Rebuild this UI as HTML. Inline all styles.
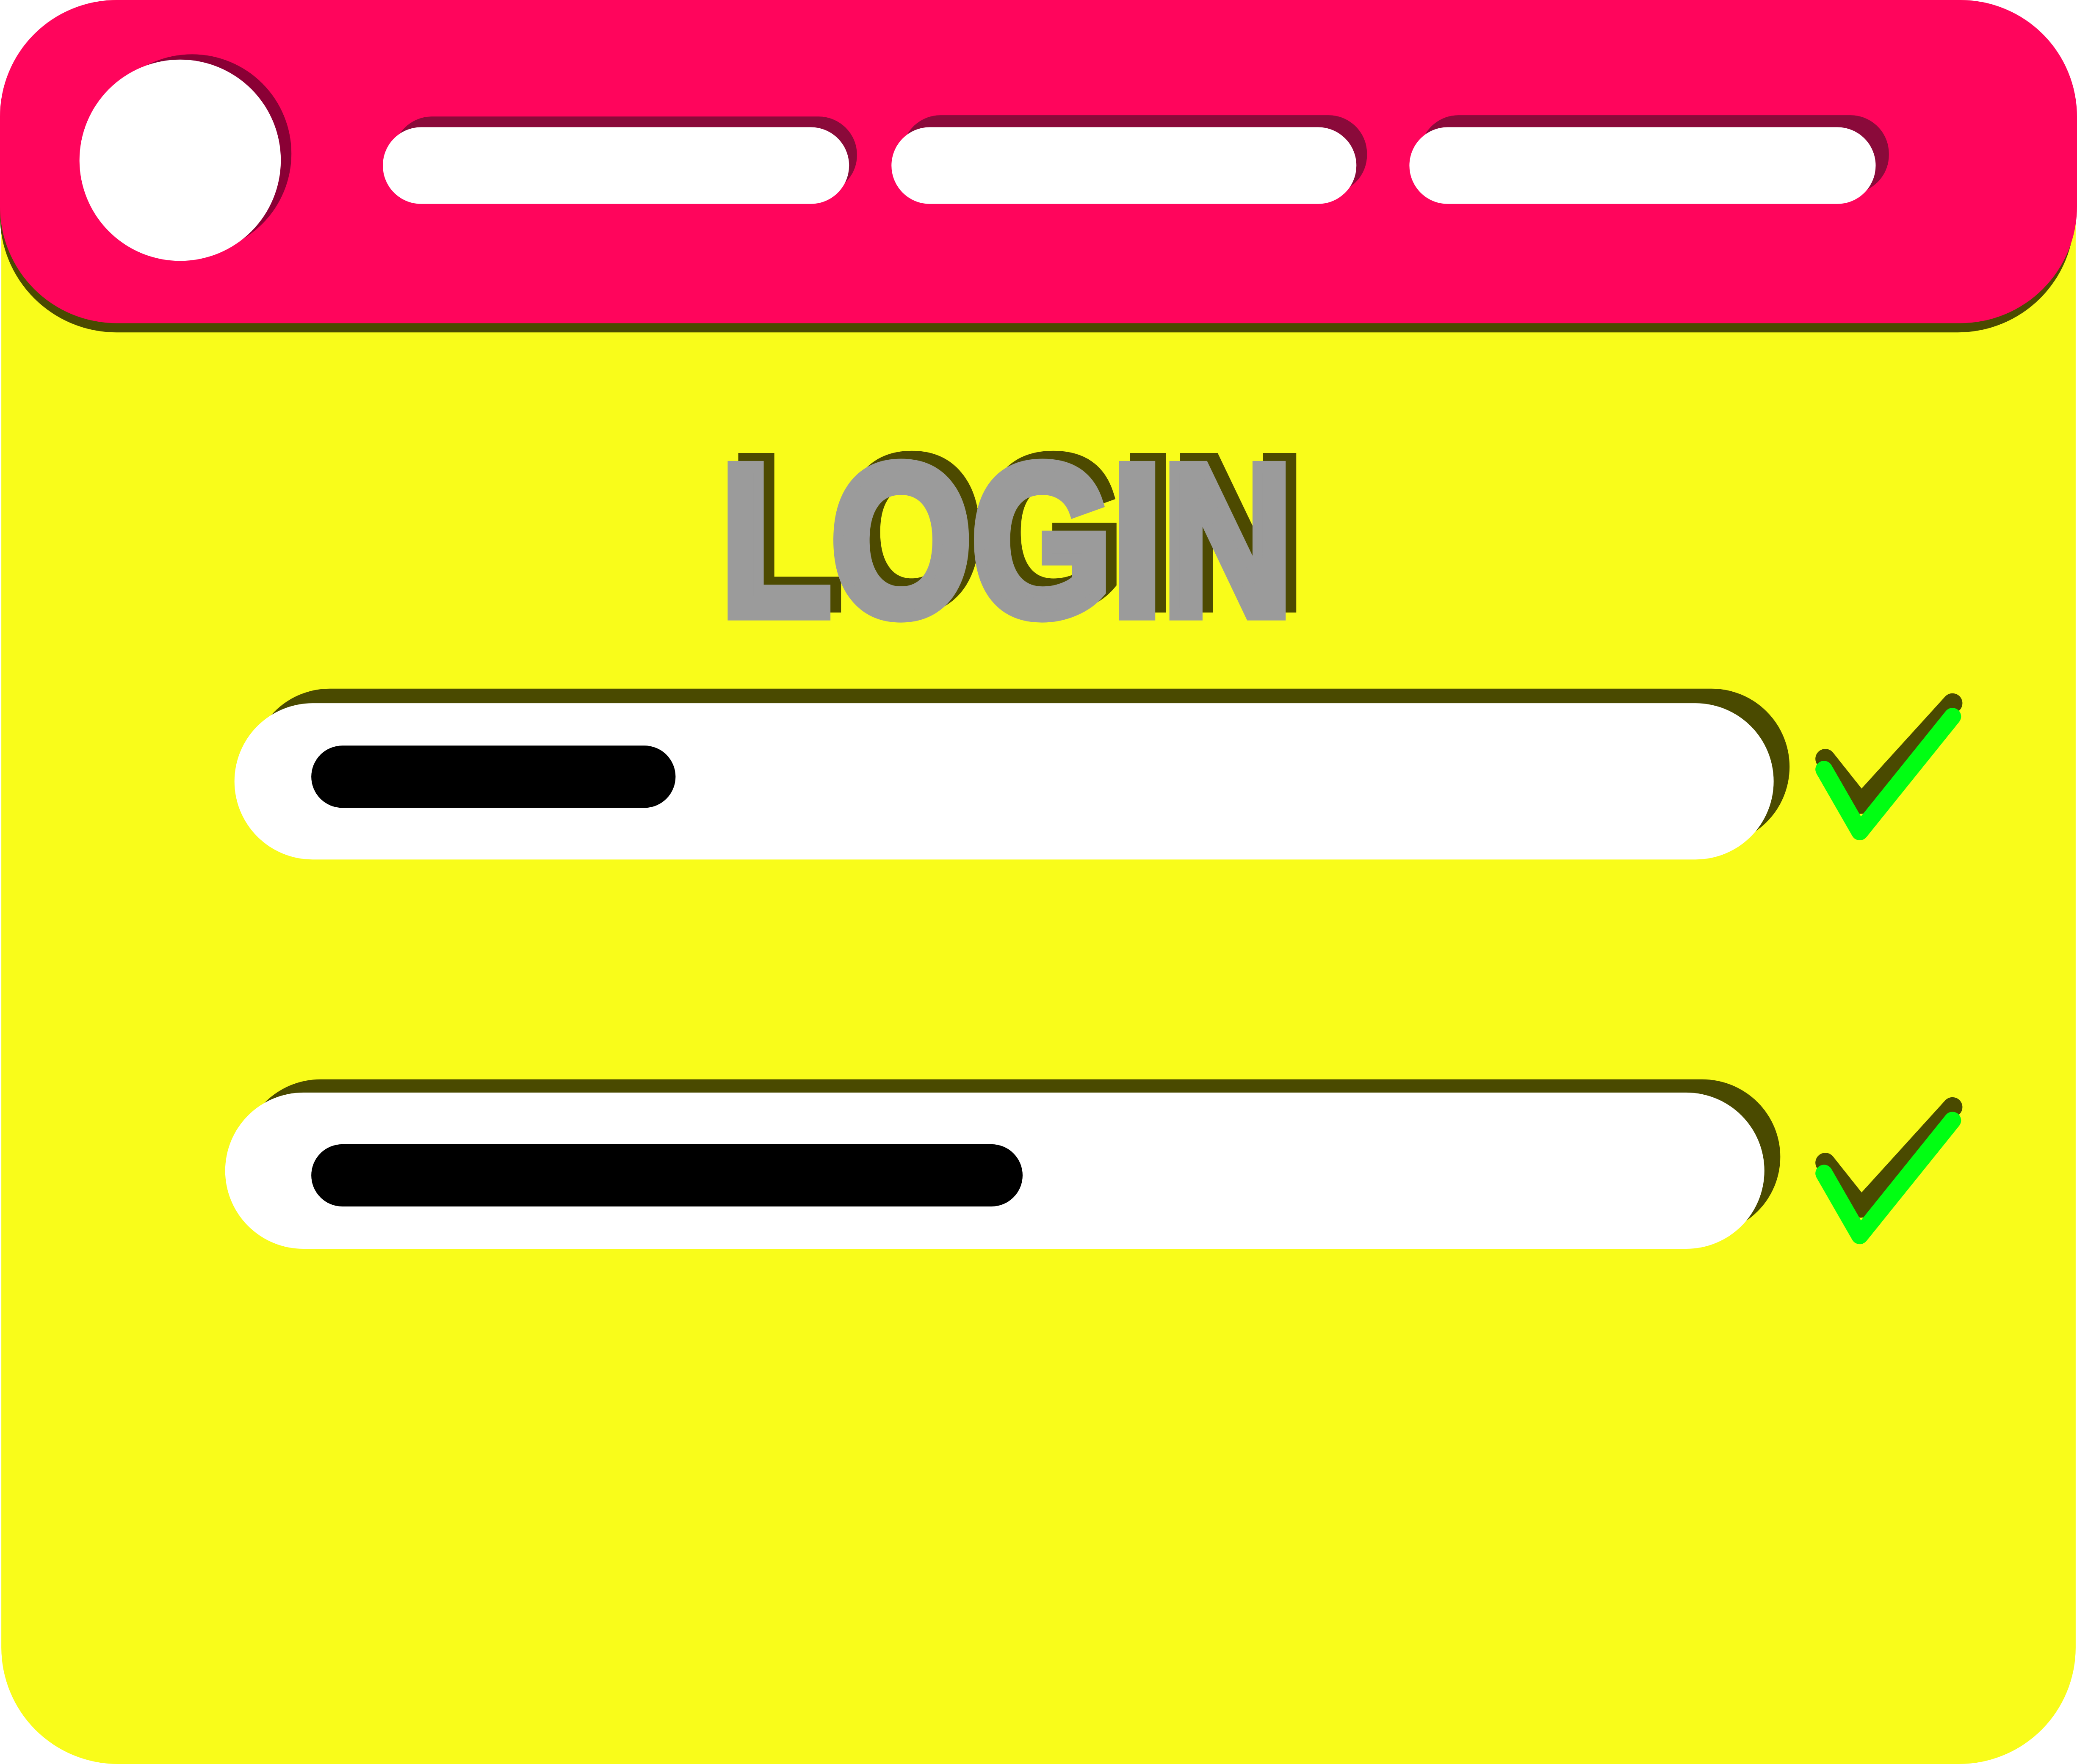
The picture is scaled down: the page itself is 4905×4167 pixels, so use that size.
<!DOCTYPE html>
<html><head><meta charset="utf-8"><style>
html,body{margin:0;padding:0;background:#fff;}
svg{display:block;}
</style></head><body>
<svg width="4905" height="4167" viewBox="0 0 1568 1332" preserveAspectRatio="none" xmlns="http://www.w3.org/2000/svg">
<rect x="1" y="0" width="1566" height="1332" rx="88" fill="#f9fc1a"/>
<rect x="0" y="10" width="1566" height="241" rx="88" fill="#4a4a00"/>
<rect x="0" y="0" width="1568" height="244" rx="88" fill="#ff055c"/>
<circle cx="145" cy="116" r="75" fill="#8a0035"/>
<circle cx="136" cy="121" r="76" fill="#fff"/>
<rect x="297" y="88" width="350" height="58" rx="29" fill="#8a0a3a"/>
<rect x="289" y="96" width="352" height="58" rx="29" fill="#fff"/>
<rect x="681" y="87" width="351" height="59" rx="29" fill="#8a0a3a"/>
<rect x="673" y="96" width="351" height="58" rx="29" fill="#fff"/>
<rect x="1072" y="87" width="354" height="59" rx="29" fill="#8a0a3a"/>
<rect x="1064" y="96" width="352" height="58" rx="29" fill="#fff"/>
<text x="552" y="458" font-family="Liberation Sans, sans-serif" font-weight="bold" font-size="162" textLength="432" lengthAdjust="spacingAndGlyphs" fill="#4d4a00" stroke="#4d4a00" stroke-width="9" stroke-linejoin="miter">LOGIN</text>
<text x="544" y="464" font-family="Liberation Sans, sans-serif" font-weight="bold" font-size="162" textLength="432" lengthAdjust="spacingAndGlyphs" fill="#9b9b9b" stroke="#9b9b9b" stroke-width="9" stroke-linejoin="miter">LOGIN</text>
<rect x="190" y="520" width="1161" height="118" rx="59" fill="#4a4a00"/>
<rect x="177" y="531" width="1162" height="118" rx="59" fill="#fff"/>
<rect x="235" y="563" width="275" height="47" rx="23.5" fill="#000"/>
<rect x="183" y="815" width="1161" height="117" rx="59" fill="#4a4a00"/>
<rect x="170" y="825" width="1162" height="118" rx="59" fill="#fff"/>
<rect x="235" y="864" width="537" height="47" rx="23.5" fill="#000"/>
<g fill="none" stroke-linecap="round" stroke-linejoin="round">
<polyline points="1378,573 1405,607 1474,531" stroke="#4a4a00" stroke-width="15"/>
<polyline points="1377,581 1404,628 1474,541" stroke="#00ff12" stroke-width="13"/>
<polyline points="1378,878 1405,912 1474,836" stroke="#4a4a00" stroke-width="15"/>
<polyline points="1377,886 1404,933 1474,846" stroke="#00ff12" stroke-width="13"/>
</g>
</svg>
</body></html>
